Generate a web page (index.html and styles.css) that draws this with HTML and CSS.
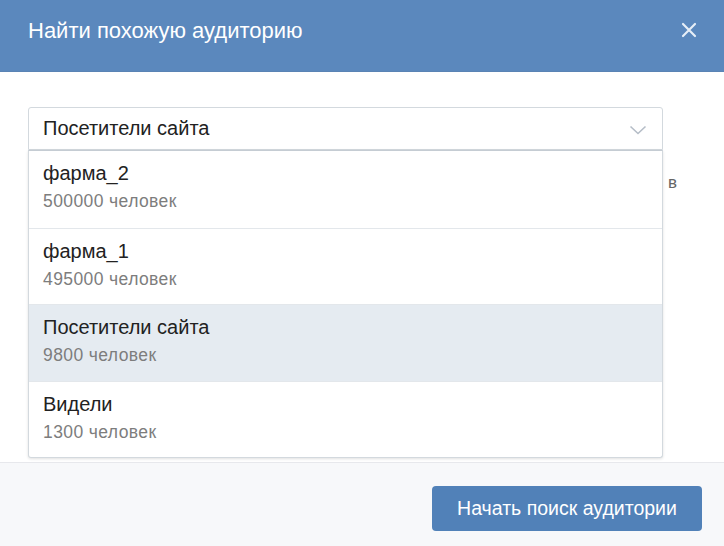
FILE: index.html
```html
<!DOCTYPE html>
<html lang="ru">
<head>
<meta charset="utf-8">
<link rel="stylesheet" href="styles.css">
</head>
<body>
<div class="modal">
  <header class="modal-header">
    <h1 class="modal-title">Найти похожую аудиторию</h1>
    <button class="close-btn" aria-label="Закрыть">
      <svg width="16" height="16" viewBox="0 0 16 16"><path d="M2 2 L14 14 M14 2 L2 14" stroke="#e6eef7" stroke-width="2.2" stroke-linecap="round"/></svg>
    </button>
  </header>
  <main class="modal-body">
    <div class="select-wrap">
      <div class="select">
        <span class="select-value">Посетители сайта</span>
        <svg class="chevron" width="18" height="10" viewBox="0 0 18 10"><path d="M1.5 1.5 L9 8.5 L16.5 1.5" fill="none" stroke="#b5bdc7" stroke-width="1.6"/></svg>
      </div>
      <div class="hint"><span class="hint-text">в</span></div>
      <ul class="dropdown">
        <li class="option"><span class="opt-title">фарма_2</span><span class="opt-sub">500000 человек</span></li>
        <li class="option"><span class="opt-title">фарма_1</span><span class="opt-sub">495000 человек</span></li>
        <li class="option selected"><span class="opt-title">Посетители сайта</span><span class="opt-sub">9800 человек</span></li>
        <li class="option"><span class="opt-title">Видели</span><span class="opt-sub">1300 человек</span></li>
      </ul>
    </div>
  </main>
  <footer class="modal-footer">
    <button class="primary-btn">Начать поиск аудитории</button>
  </footer>
</div>
</body>
</html>
```
FILE: styles.css
```css
* { box-sizing: border-box; }
html, body { margin: 0; padding: 0; }
body {
  width: 724px;
  height: 546px;
  overflow: hidden;
  font-family: "Liberation Sans", Arial, sans-serif;
  background: #fff;
}
.modal {
  display: flex;
  flex-direction: column;
  height: 546px;
}
.modal-header {
  height: 72px;
  flex: none;
  background: #5b88bd;
  display: flex;
  align-items: flex-start;
  justify-content: space-between;
  padding: 17px 27px 0 28px;
  border-bottom: 1px solid #5a83b4;
}
.modal-title {
  margin: 0;
  font-weight: normal;
  font-size: 22px;
  line-height: 28px;
  color: #fff;
}
.close-btn {
  background: none;
  border: 0;
  padding: 0;
  margin-top: 5px;
  width: 16px;
  height: 16px;
  cursor: pointer;
}
.close-btn svg { display: block; }
.modal-body {
  flex: 1;
  padding: 35px 47px 0 28px;
}
.select-wrap {
  position: relative;
  width: 649px;
}
.select {
  width: 635px;
  height: 43px;
  border: 1px solid #d3d9de;
  border-radius: 3px 3px 0 0;
  display: flex;
  align-items: center;
  justify-content: space-between;
  padding: 0 15px 0 14px;
  background: #fff;
}
.select-value {
  font-size: 20px;
  color: #222;
}
.chevron { margin-top: 2px; }
.hint {
  margin: 22px 0 0 638px;
  display: flex;
  justify-content: flex-end;
}
.hint-text {
  flex: none;
  font-size: 17px;
  line-height: 22px;
  color: #666;
  white-space: nowrap;
}
.dropdown {
  position: absolute;
  top: 43px;
  left: 0;
  width: 635px;
  margin: 0;
  padding: 0;
  list-style: none;
  background: #fff;
  border: 1px solid #d3d9de;
  border-top-color: #c5ccd3;
  border-radius: 0 0 3px 3px;
  box-shadow: 0 1px 3px rgba(0,0,0,0.12);
}
.option {
  height: 76.5px;
  padding: 9px 14px 0;
  display: flex;
  flex-direction: column;
  border-top: 1px solid #e3e7eb;
}
.option:first-child { border-top: 0; }
.option.selected { background: #e5ebf1; }
.opt-title {
  font-size: 20px;
  line-height: 26px;
  color: #222;
}
.opt-sub {
  font-size: 17.5px;
  letter-spacing: 0.4px;
  line-height: 22px;
  margin-top: 4px;
  color: #7d7d7d;
}
.modal-footer {
  height: 84px;
  flex: none;
  background: #f7f8fa;
  border-top: 1px solid #e7e8ec;
  display: flex;
  justify-content: flex-end;
  align-items: flex-start;
  padding: 23px 22px 0 0;
}
.primary-btn {
  width: 270px;
  height: 45px;
  border: 0;
  border-radius: 4px;
  background: #5181b8;
  color: #fff;
  font-family: "Liberation Sans", Arial, sans-serif;
  font-size: 19.5px;
  cursor: pointer;
}
```
